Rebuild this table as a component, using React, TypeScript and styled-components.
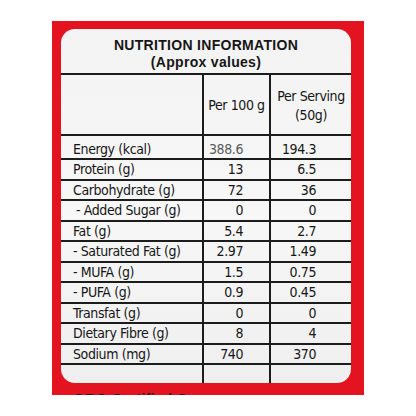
import styled, { createGlobalStyle } from 'styled-components';

const GlobalStyle = createGlobalStyle`
  body {
    margin: 0;
    background: #ffffff;
  }
`;

const Page = styled.div`
  width: 416px;
  height: 416px;
  padding: 21px 0 0 52px;
  box-sizing: border-box;
  background: #ffffff;
`;

const Panel = styled.div`
  width: 312px;
  height: 374px;
  box-sizing: border-box;
  padding: 8px 13px 0 9px;
  background: #e3141f;
  overflow: hidden;
`;

const Card = styled.div`
  width: 290px;
  height: 354px;
  background: linear-gradient(180deg, #f3f3f3 0%, #f7f7f7 50%, #efefef 100%);
  border-radius: 14px;
  overflow: hidden;
  font-family: "DejaVu Sans Condensed", "DejaVu Sans", sans-serif;
  font-stretch: condensed;
  color: #161616;
`;

const Title = styled.div`
  height: 44px;
  box-sizing: border-box;
  padding-top: 8px;
  text-align: center;
  font-family: "Liberation Sans", Arial, sans-serif;
  font-stretch: normal;
  font-weight: 700;
  font-size: 14px;
  line-height: 17px;
  letter-spacing: 0.3px;
`;

const Table = styled.div`
  display: grid;
  grid-template-columns: 141px 67px 82px;
`;

const Cell = styled.div<{ $h: number; $col: number; $pad?: number }>`
  height: ${(p) => p.$h}px;
  box-sizing: border-box;
  border-top: 2px solid #1c1c1c;
  border-left: ${(p) => (p.$col > 0 ? '2px solid #1c1c1c' : 'none')};
  display: flex;
  align-items: center;
  font-size: 14px;
  line-height: 17px;
  letter-spacing: -0.4px;
  padding-top: ${(p) => p.$pad ?? 1}px;
  white-space: nowrap;
`;

const Label = styled(Cell)<{ $indent?: boolean }>`
  padding-left: ${(p) => (p.$indent ? 15 : 12)}px;
`;

const Value = styled(Cell)<{ $muted?: boolean }>`
  justify-content: flex-end;
  padding-right: ${(p) => (p.$col === 1 ? 26 : 35)}px;
  color: ${(p) => (p.$muted ? '#5a5a5a' : '#161616')};
`;

const Head = styled(Cell)`
  justify-content: center;
  text-align: center;
  padding-top: 2px;
  line-height: 19px;
`;

const Footer = styled.div`
  margin-top: 7px;
  padding-left: 12px;
  font-family: "Liberation Sans", Arial, sans-serif;
  font-weight: 700;
  font-size: 15px;
  line-height: 17px;
  color: #2a1a1a;
`;

const rows: { name: string; a: string; b: string; indent?: boolean; muted?: boolean }[] = [
  { name: 'Energy (kcal)', a: '388.6', b: '194.3', muted: true },
  { name: 'Protein (g)', a: '13', b: '6.5' },
  { name: 'Carbohydrate (g)', a: '72', b: '36' },
  { name: '- Added Sugar (g)', a: '0', b: '0', indent: true },
  { name: 'Fat (g)', a: '5.4', b: '2.7' },
  { name: '- Saturated Fat (g)', a: '2.97', b: '1.49' },
  { name: '- MUFA (g)', a: '1.5', b: '0.75' },
  { name: '- PUFA (g)', a: '0.9', b: '0.45' },
  { name: 'Transfat (g)', a: '0', b: '0' },
  { name: 'Dietary Fibre (g)', a: '8', b: '4' },
  { name: 'Sodium (mg)', a: '740', b: '370' },
];

export default function App() {
  return (
    <>
      <GlobalStyle />
      <Page>
        <Panel>
          <Card>
            <Title>
              NUTRITION INFORMATION
              <br />
              (Approx values)
            </Title>
            <Table>
              <Head $h={61} $col={0}></Head>
              <Head $h={61} $col={1}>Per 100 g</Head>
              <Head $h={61} $col={2}>
                Per Serving
                <br />
                (50g)
              </Head>
              {rows.map((r, i) => {
                const h = i === 0 ? 24 : 20.5;
                const pad = i === 0 ? 4 : 1;
                return [
                  <Label key={r.name} $h={h} $col={0} $pad={pad} $indent={r.indent}>{r.name}</Label>,
                  <Value key={r.name + 'a'} $h={h} $col={1} $pad={pad} $muted={r.muted}>{r.a}</Value>,
                  <Value key={r.name + 'b'} $h={h} $col={2} $pad={pad}>{r.b}</Value>,
                ];
              })}
              <Cell $h={30} $col={0}></Cell>
              <Cell $h={30} $col={1}></Cell>
              <Cell $h={30} $col={2}></Cell>
            </Table>
          </Card>
          <Footer>GRG Certified Company</Footer>
        </Panel>
      </Page>
    </>
  );
}
